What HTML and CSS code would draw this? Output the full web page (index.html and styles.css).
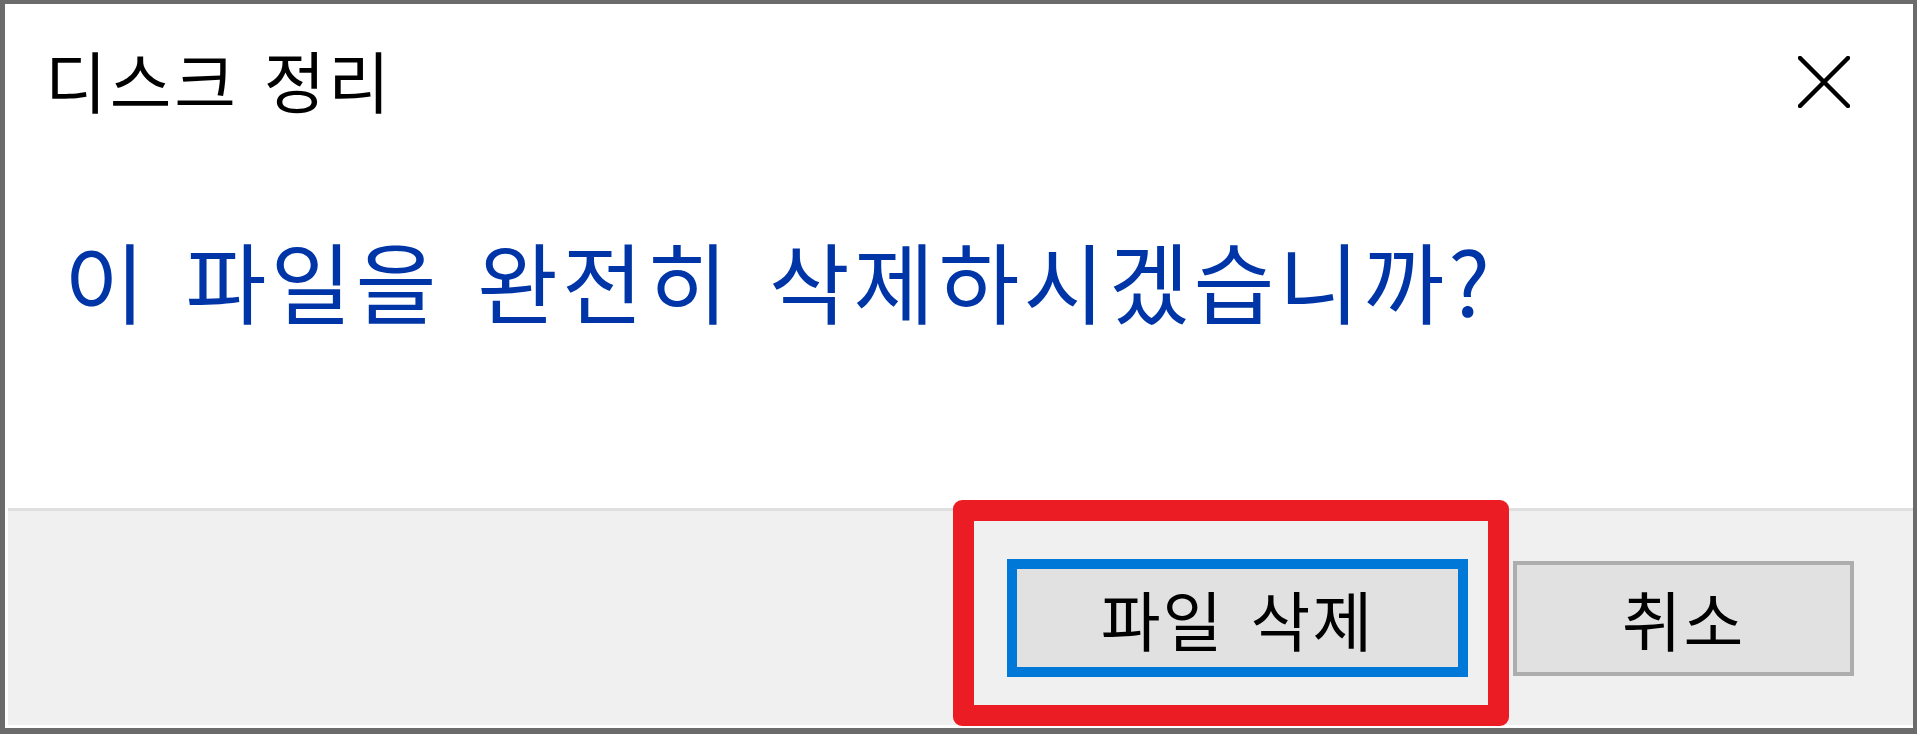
FILE: index.html
```html
<!DOCTYPE html>
<html lang="ko">
<head>
<meta charset="utf-8">
<title>디스크 정리</title>
<link rel="stylesheet" href="styles.css">
</head>
<body>
<div class="window">
  <div class="content">
    <div class="titlebar">
      <span class="title">디스크 정리</span>
      <svg class="close" width="52" height="52" viewBox="0 0 52 52" aria-label="닫기">
        <line x1="2" y1="2" x2="50" y2="50" />
        <line x1="50" y1="2" x2="2" y2="50" />
      </svg>
    </div>
    <div class="message">이 파일을 완전히 삭제하시겠습니까?</div>
  </div>
  <div class="footer">
    <button class="btn btn-primary">파일 삭제</button>
    <button class="btn btn-cancel">취소</button>
  </div>
  <div class="highlight"></div>
</div>
</body>
</html>
```

FILE: styles.css
```css
html, body {
  margin: 0;
  padding: 0;
  background: #ffffff;
}

body {
  width: 1920px;
  height: 734px;
  overflow: hidden;
  font-family: "Noto Sans CJK KR", "Noto Sans", sans-serif;
}

.window {
  position: relative;
  box-sizing: border-box;
  width: 1917px;
  height: 734px;
  background: #ffffff;
  border-style: solid;
  border-color: #6b6b6b;
  border-width: 4px 4px 6px 5px;
  padding: 0 0 3px 3px;
  display: flex;
  flex-direction: column;
}

.content {
  height: 504px;
  display: flex;
  flex-direction: column;
}

.titlebar {
  display: flex;
  justify-content: space-between;
  align-items: flex-start;
  padding: 41px 63px 0 37px;
}

.title {
  font-size: 67px;
  line-height: 67px;
  color: #000000;
  letter-spacing: 3px;
  word-spacing: 3px;
}

.close {
  margin-top: 11px;
  stroke: #000000;
  stroke-width: 4.5;
  stroke-linecap: round;
}

.message {
  margin-top: 123px;
  padding-left: 56px;
  font-size: 88px;
  line-height: 88px;
  color: #0035a8;
  letter-spacing: 4px;
  word-spacing: 8px;
}

.footer {
  flex: 1;
  background: #f0f0f0;
  border-top: 3px solid #dfdfdf;
  display: flex;
  justify-content: flex-end;
  align-items: flex-start;
  gap: 45px;
  padding: 48px 59px 0 0;
}

.btn {
  box-sizing: border-box;
  font-family: "Noto Sans CJK KR", "Noto Sans", sans-serif;
  font-size: 65px;
  line-height: 1;
  color: #000000;
  background: #e1e1e1;
  margin: 0;
  padding: 0;
  letter-spacing: 2px;
  word-spacing: 6px;
  display: flex;
  align-items: center;
  justify-content: center;
}

.btn-primary {
  width: 461px;
  height: 118px;
  border: 10px solid #0078d7;
}

.btn-cancel {
  width: 341px;
  height: 115px;
  margin-top: 2px;
  border: 4px solid #adadad;
}

.highlight {
  position: absolute;
  left: 948px;
  top: 496px;
  width: 556px;
  height: 226px;
  box-sizing: border-box;
  border: 21px solid #ec1c24;
  border-radius: 9px;
  pointer-events: none;
}
```
